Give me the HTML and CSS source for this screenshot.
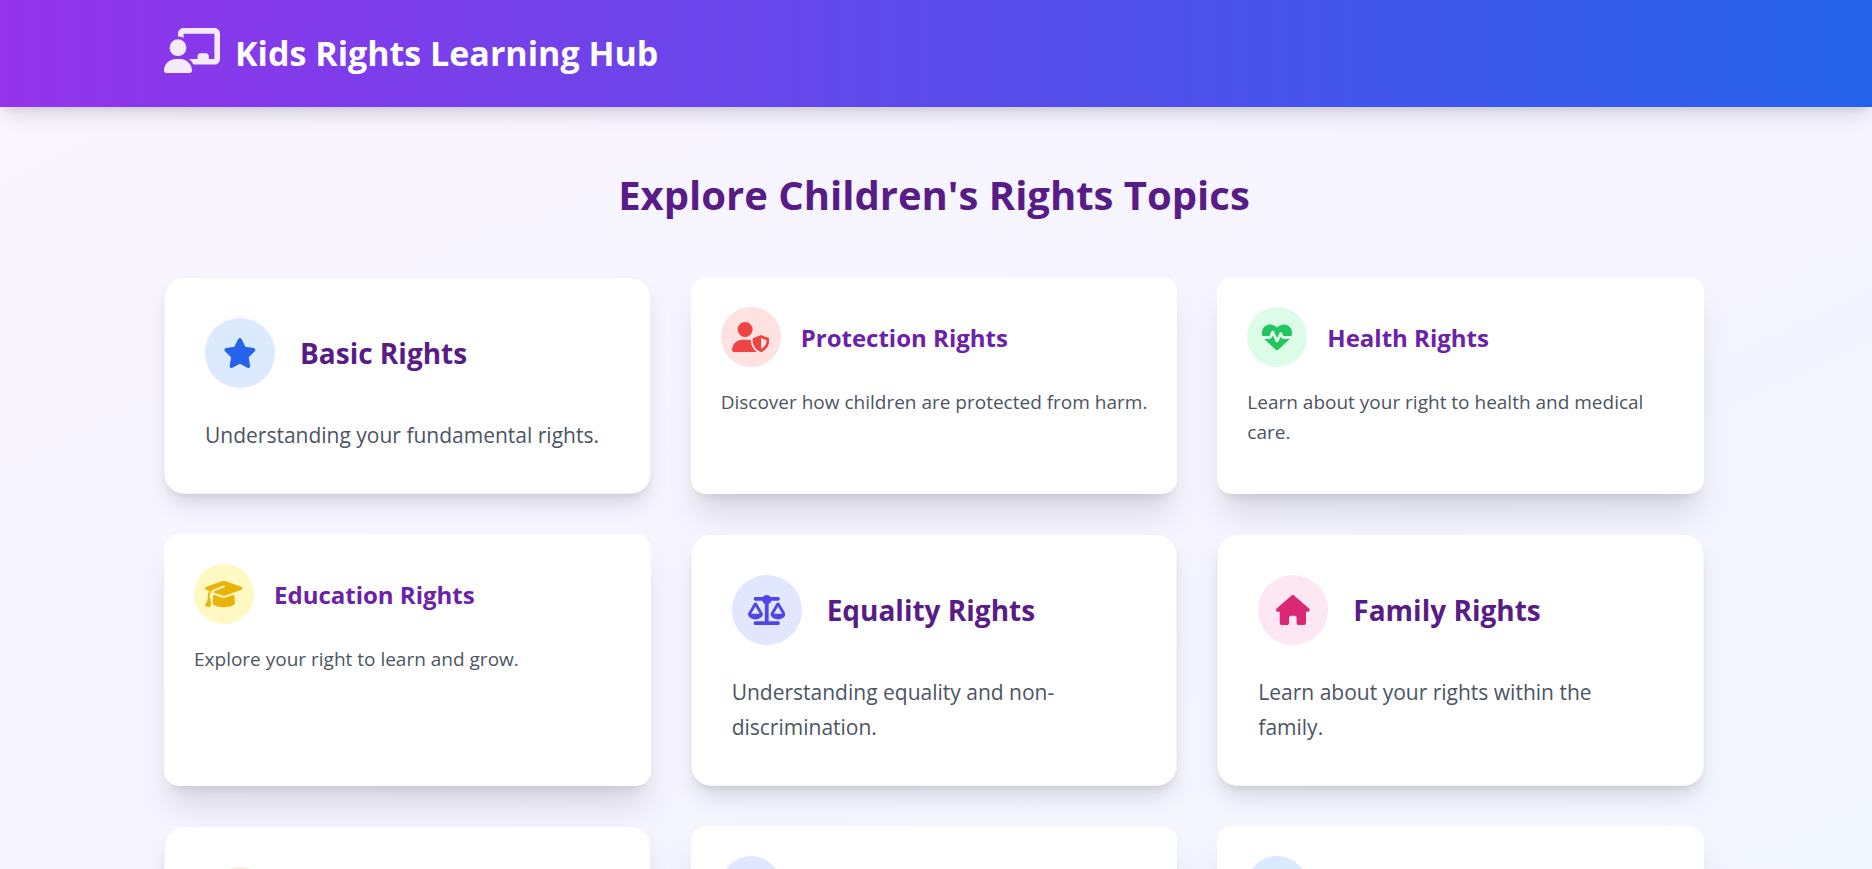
FILE: index.html
```html
<!DOCTYPE html>
<html lang="en">
<head>
<meta charset="utf-8">
<meta name="viewport" content="width=device-width, initial-scale=1">
<title>Kids Rights Learning Hub</title>
<link rel="stylesheet" href="styles.css">
</head>
<body>
<header class="site-header">
  <div class="container brand">
    <svg class="brand-icon" viewBox="0 0 640 512" aria-hidden="true"><path d="M160 64c0-35.300 28.700-64 64-64H576c35.300 0 64 28.700 64 64V352c0 35.300-28.700 64-64 64H336.800c-11.800-25.500-29.900-47.500-52.400-64H384V320c0-17.700 14.300-32 32-32h64c17.700 0 32 14.300 32 32v32h64V64L224 64v49.100C205.200 102.200 183.300 96 160 96V64zm0 64a96 96 0 1 1 0 192 96 96 0 1 1 0-192zM133.300 352h53.300C260.300 352 320 411.700 320 485.300c0 14.700-11.900 26.700-26.700 26.700H26.700C11.900 512 0 500.100 0 485.300C0 411.700 59.700 352 133.300 352z"/></svg>
    <h1 class="brand-title">Kids Rights Learning Hub</h1>
  </div>
</header>
<main class="container main">
  <h2 class="page-title">Explore Children's Rights Topics</h2>
  <div class="topics">
    <article class="card card-large">
      <div class="card-head">
        <span class="badge badge-blue"><svg class="icon" viewBox="0 0 576 512" aria-hidden="true"><path d="M316.900 18C311.600 7 300.400 0 288.100 0s-23.400 7-28.800 18L195 150.300 51.400 171.500c-12 1.800-22 10.200-25.700 21.700s-.7 24.200 7.900 32.700L137.800 329 113.200 474.700c-2 12 3 24.200 12.900 31.300s23 8 33.800 2.300l128.300-68.500 128.300 68.500c10.800 5.700 23.900 4.900 33.800-2.300s14.900-19.300 12.900-31.300L438.500 329 542.700 225.900c8.600-8.500 11.700-21.200 7.900-32.700s-13.700-19.900-25.700-21.700L381.200 150.300 316.900 18z"/></svg></span>
        <h3 class="card-title">Basic Rights</h3>
      </div>
      <p class="card-text">Understanding your fundamental rights.</p>
    </article>
    <article class="card card-small">
      <div class="card-head">
        <span class="badge badge-red"><svg class="icon" viewBox="0 0 640 512" aria-hidden="true"><path d="M224 256A128 128 0 1 0 224 0a128 128 0 1 0 0 256zm-45.700 48C79.800 304 0 383.800 0 482.300C0 498.700 13.300 512 29.700 512H418.300c1.800 0 3.500-.2 5.300-.5c-76.300-55.100-99.800-141-103.100-200.200c-16.100-4.800-33.100-7.300-50.700-7.300H178.300zm308.800-78.300l-120 48C358 277.400 352 286.200 352 296c0 63.300 25.900 168.800 134.800 214.200c5.900 2.500 12.600 2.500 18.500 0C614.100 464.800 640 359.300 640 296c0-9.800-6-18.600-15.100-22.300l-120-48c-5.700-2.300-12.100-2.300-17.800 0zM591.400 312c-3.900 50.700-27.200 116.700-95.400 149.700V273.800L591.400 312z"/></svg></span>
        <h3 class="card-title">Protection Rights</h3>
      </div>
      <p class="card-text">Discover how children are protected from harm.</p>
    </article>
    <article class="card card-small">
      <div class="card-head">
        <span class="badge badge-green"><svg class="icon" viewBox="0 0 512 512" aria-hidden="true"><path d="M228.300 469.100L47.600 300.400c-4.200-3.900-8.200-8.100-11.900-12.400h87c22.600 0 43-13.600 51.700-34.500l10.500-25.200 49.300 109.500c3.800 8.500 12.100 14 21.400 14.100s17.800-5 22-13.300L320 253.700l1.700 3.400c9.500 19 28.900 31 50.100 31H476.300c-3.700 4.300-7.700 8.500-11.900 12.400L283.700 469.100c-7.500 7-17.400 10.900-27.700 10.900s-20.200-3.900-27.700-10.900zM503.700 240h-132c-3 0-5.800-1.700-7.200-4.400l-23.200-46.300c-4.100-8.100-12.400-13.300-21.500-13.300s-17.400 5.100-21.500 13.300l-41.400 82.800L205.900 158.200c-3.900-8.700-12.700-14.300-22.200-14.100s-18.100 5.900-21.800 14.800l-31.800 76.300c-1.200 3-4.200 4.900-7.400 4.900H16c-2.600 0-5 .4-7.300 1.100C3 225.200 0 208.200 0 190.900v-5.800c0-69.900 50.500-129.500 119.400-141C165 36.500 211.400 51.400 244 84l12 12 12-12c32.600-32.600 79-47.500 124.600-39.900C461.500 55.600 512 115.200 512 185.100v5.800c0 16.900-2.800 33.500-8.300 49.100z"/></svg></span>
        <h3 class="card-title">Health Rights</h3>
      </div>
      <p class="card-text">Learn about your right to health and medical care.</p>
    </article>
    <article class="card card-small">
      <div class="card-head">
        <span class="badge badge-yellow"><svg class="icon" viewBox="0 0 640 512" aria-hidden="true"><path d="M320 32c-8.100 0-16.100 1.400-23.700 4.100L15.800 137.400C6.300 140.900 0 149.900 0 160s6.300 19.100 15.800 22.600l57.900 20.900C57.300 229.300 48 259.800 48 291.900v28.100c0 28.400-10.800 57.700-22.300 80.800c-6.500 13-13.900 25.800-22.500 37.600C0 442.700-.9 448.300 .9 453.400s6 8.900 11.200 10.200l64 16c4.200 1.100 8.700 .3 12.400-2s6.300-6.100 7.100-10.400c8.600-42.800 4.300-81.200-2.100-108.700C90.300 344.300 86 329.800 80 316.500V291.900c0-30.200 10.200-58.700 27.900-81.500c12.900-15.500 29.600-28 49.200-35.700l157-61.700c8.200-3.200 17.500 .8 20.700 9s-.8 17.500-9 20.700l-157 61.700c-12.400 4.900-23.300 12.400-32.200 21.600l159.600 57.600c7.600 2.700 15.600 4.100 23.700 4.100s16.100-1.400 23.700-4.100L624.200 182.600c9.500-3.400 15.800-12.500 15.800-22.600s-6.300-19.100-15.800-22.600L343.700 36.100C336.100 33.400 328.100 32 320 32zM128 408c0 35.300 86 72 192 72s192-36.700 192-72L496.700 262.600 354.500 314c-11.100 4-22.800 6-34.500 6s-23.500-2-34.500-6L143.300 262.600 128 408z"/></svg></span>
        <h3 class="card-title">Education Rights</h3>
      </div>
      <p class="card-text">Explore your right to learn and grow.</p>
    </article>
    <article class="card card-large">
      <div class="card-head">
        <span class="badge badge-indigo"><svg class="icon" viewBox="0 0 640 512" aria-hidden="true"><path d="M384 32H512c17.700 0 32 14.300 32 32s-14.300 32-32 32H398.400c-5.200 25.800-22.900 47.100-46.400 57.300V448H512c17.700 0 32 14.300 32 32s-14.300 32-32 32H320 128c-17.700 0-32-14.300-32-32s14.300-32 32-32H288V153.300c-23.500-10.300-41.200-31.600-46.400-57.300H128c-17.700 0-32-14.300-32-32s14.300-32 32-32H256c14.600-19.400 37.800-32 64-32s49.400 12.600 64 32zm55.600 288H584.400L512 195.800 439.600 320zM512 416c-62.900 0-115.200-34-126-78.900c-2.600-11 1-22.300 6.700-32.100l95.200-163.200c5-8.600 14.200-13.800 24.100-13.800s19.100 5.300 24.100 13.800l95.200 163.200c5.700 9.800 9.300 21.100 6.700 32.100C627.200 382 574.900 416 512 416zM126.800 195.800L54.400 320H199.300L126.800 195.800zM.9 337.100c-2.600-11 1-22.300 6.700-32.100l95.200-163.200c5-8.600 14.200-13.800 24.100-13.800s19.100 5.300 24.100 13.800l95.200 163.200c5.700 9.800 9.300 21.100 6.700 32.100C242 382 189.700 416 126.800 416S11.700 382 .9 337.100z"/></svg></span>
        <h3 class="card-title">Equality Rights</h3>
      </div>
      <p class="card-text">Understanding equality and non-discrimination.</p>
    </article>
    <article class="card card-large">
      <div class="card-head">
        <span class="badge badge-pink"><svg class="icon" viewBox="0 0 576 512" aria-hidden="true"><path d="M575.800 255.500c0 18-15 32.100-32 32.100h-32l.7 160.200c0 2.700-.2 5.400-.5 8.100V472c0 22.100-17.900 40-40 40H456c-1.100 0-2.200 0-3.300-.1c-1.400 .1-2.800 .1-4.200 .1H416 392c-22.100 0-40-17.900-40-40V448 384c0-17.700-14.300-32-32-32H256c-17.700 0-32 14.300-32 32v64 24c0 22.100-17.900 40-40 40H160 128.100c-1.500 0-3-.1-4.500-.2c-1.200 .1-2.400 .2-3.600 .2H104c-22.100 0-40-17.900-40-40V360c0-.9 0-1.900 .1-2.800V287.600H32c-18 0-32-14-32-32.100c0-9 3-17 10-24L266.400 8c7-7 15-8 22-8s15 2 21 7L564.800 231.500c8 7 12 15 11 24z"/></svg></span>
        <h3 class="card-title">Family Rights</h3>
      </div>
      <p class="card-text">Learn about your rights within the family.</p>
    </article>
    <article class="card card-large">
      <div class="card-head"><span class="badge badge-orange"></span></div>
    </article>
    <article class="card card-small">
      <div class="card-head"><span class="badge badge-indigo"></span></div>
    </article>
    <article class="card card-small">
      <div class="card-head"><span class="badge badge-blue"></span></div>
    </article>
  </div>
</main>
</body>
</html>
```
FILE: styles.css
```css
* {
  box-sizing: border-box;
  margin: 0;
}

html {
  height: 100%;
  overflow: hidden;
}

body {
  height: 100%;
  overflow: hidden;
  font-family: "Segoe UI", "Open Sans", "Noto Sans", sans-serif;
  color: #4b5563;
  background: linear-gradient(to bottom right, #fdf5ff, #f8f5ff 15%, #f5f4ff 60%, #f2f6ff);
}

.container {
  width: 100%;
  max-width: 1600px;
  margin: 0 auto;
  padding: 0 32px 0 28px;
}

.site-header {
  position: relative;
  padding: 25px 0;
  color: #ffffff;
  background: linear-gradient(to right, #9333ea, #2563eb);
  box-shadow: 0 12px 18px -4px rgba(0, 0, 0, 0.12), 0 5px 8px -4px rgba(0, 0, 0, 0.1);
}

.brand {
  display: flex;
  align-items: center;
  gap: 15px;
}

.brand-icon {
  width: 56px;
  height: 45px;
  margin-bottom: 6px;
  fill: currentColor;
  opacity: 0.9;
}

.brand-title {
  font-size: 34px;
  line-height: 57px;
  font-weight: 700;
}

.main {
  padding-top: 58px;
}

.page-title {
  margin-bottom: 52px;
  font-size: 40px;
  line-height: 60px;
  font-weight: 700;
  text-align: center;
  color: #581c87;
}

.topics {
  display: grid;
  grid-template-columns: repeat(3, minmax(0, 1fr));
  gap: 40px;
}

.card {
  background: #ffffff;
}

.card-head {
  display: flex;
  align-items: center;
}

.badge {
  display: flex;
  flex: none;
  align-items: center;
  justify-content: center;
  border-radius: 50%;
}

.icon {
  height: 30px;
  fill: currentColor;
}

.card-title {
  font-weight: 700;
}

.card-large {
  padding: 40px 45px 40px 40px;
  border: 1px solid #f3f4f6;
  border-radius: 20px;
  box-shadow: 0 14px 22px -4px rgba(0, 0, 0, 0.12), 0 5px 8px -4px rgba(0, 0, 0, 0.1);
}

.card-large .card-head {
  gap: 25px;
  margin-bottom: 30px;
}

.card-large .badge {
  width: 70px;
  height: 70px;
}

.card-large .card-title {
  font-size: 28px;
  line-height: 40px;
  color: #581c87;
}

.card-large .card-text {
  font-size: 21px;
  line-height: 35px;
}

.card-small {
  padding: 30px 25px 30px 30px;
  border-radius: 15px;
  box-shadow: 0 25px 32px -6px rgba(0, 0, 0, 0.12), 0 10px 12px -8px rgba(0, 0, 0, 0.1);
}

.card-small .card-head {
  gap: 20px;
  margin-bottom: 20px;
}

.card-small .badge {
  width: 60px;
  height: 60px;
}

.card-small .card-title {
  font-size: 24px;
  line-height: 35px;
  color: #6b21a8;
}

.card-small .card-text {
  font-size: 19px;
  line-height: 30px;
}

.badge-blue {
  color: #2563eb;
  background: #dbeafe;
}

.badge-red {
  color: #ef4444;
  background: #fee2e2;
}

.badge-green {
  color: #22c55e;
  background: #dcfce7;
}

.badge-yellow {
  color: #eab308;
  background: #fef9c3;
}

.badge-indigo {
  color: #4f46e5;
  background: #e0e7ff;
}

.badge-pink {
  color: #db2777;
  background: #fce7f3;
}

.badge-orange {
  color: #ea580c;
  background: #ffedd5;
}
```
